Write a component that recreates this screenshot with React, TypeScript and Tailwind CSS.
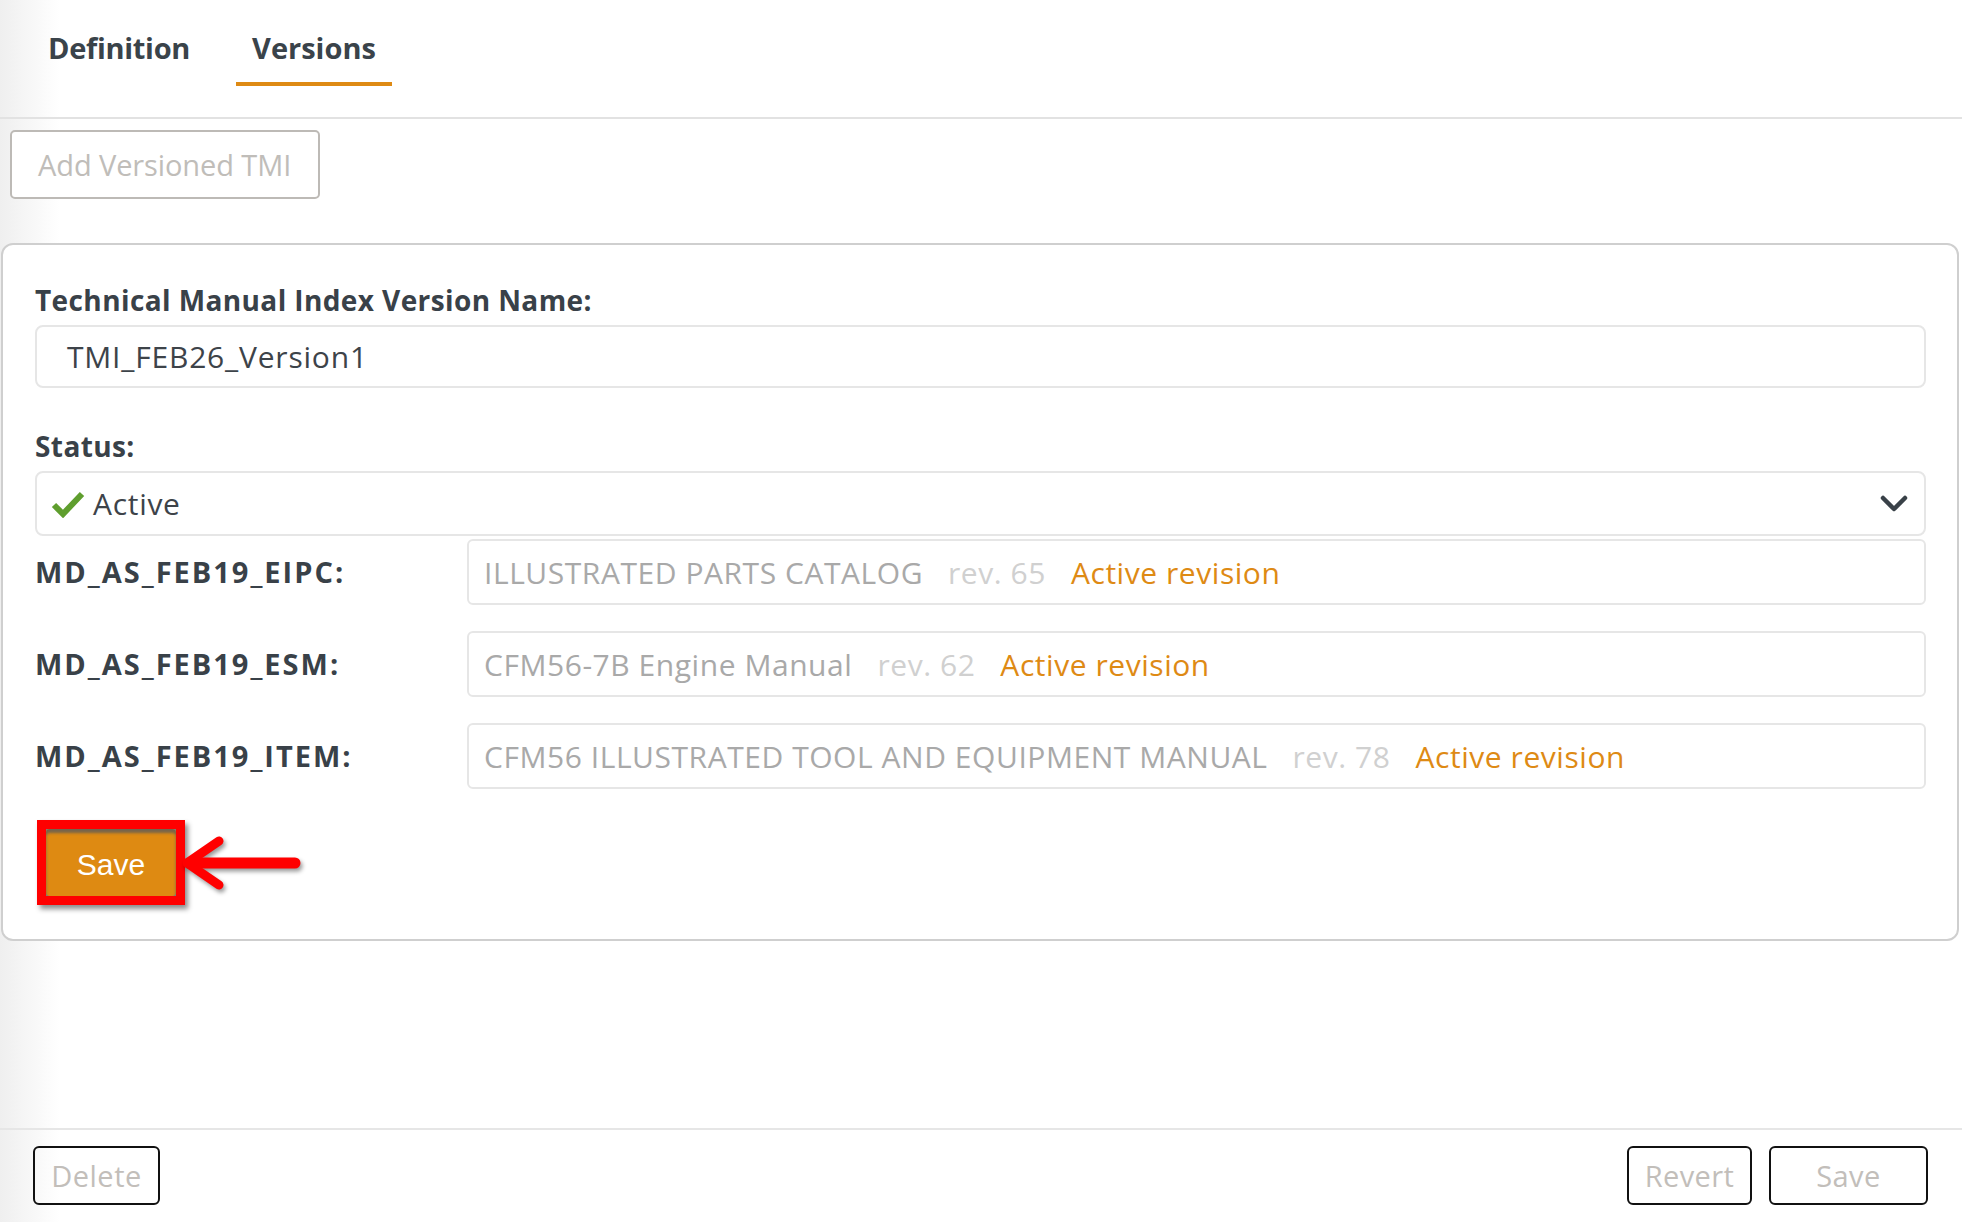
import React from "react";

const font = "font-['Open_Sans',sans-serif]";

function Row({ label, title, rev }: { label: string; title: string; rev: string }) {
  return (
    <div className="flex items-center">
      <div className="w-[432px] shrink-0 text-[29px] font-bold text-[#394148] tracking-[2px]">{label}</div>
      <div className="flex h-[66px] flex-1 items-center rounded-[6px] border-2 border-[#e6e6e6] pl-[15px] text-[30px] tracking-[0.55px]">
        <span className="text-[#a9a9a9]">{title}</span>
        <span className="ml-[25px] text-[#d0d0d0]">{rev}</span>
        <span className="ml-[25px] text-[#de8a14]">Active revision</span>
      </div>
    </div>
  );
}

export default function App() {
  return (
    <div className={`${font} relative flex h-[1222px] w-[1962px] flex-col overflow-hidden bg-[linear-gradient(to_right,#efefef,#ffffff_60px)]`}>
      {/* Tabs */}
      <div className="flex h-[119px] shrink-0 items-start gap-[30px] border-b-2 border-[#e2e2e2] pl-[32px] pt-[26px]">
        <div className="flex h-[60px] items-start px-[16px] text-[29px] font-bold text-[#3a434a] tracking-[-0.3px]">Definition</div>
        <div className="flex h-[60px] items-start border-b-4 border-[#de8a14] px-[16px] text-[29px] font-bold text-[#3a434a] tracking-[0px]">Versions</div>
      </div>

      {/* Add button */}
      <div className="ml-[10px] mt-[11px] flex h-[69px] w-[310px] items-center rounded-[5px] border-2 border-[#bdbab6] bg-white pl-[26px] text-[29px] text-[#c0bdb9] tracking-[-0.1px]">
        Add Versioned TMI
      </div>

      {/* Card */}
      <div className="ml-[1px] mt-[44px] flex h-[698px] w-[1958px] flex-col rounded-[12px] border-2 border-[#cfcfcf] bg-white pl-[32px] pr-[31px] pt-[37px]">
        <div className="h-[36px] text-[28px] font-bold leading-[36px] text-[#394148] tracking-[0.4px]">Technical Manual Index Version Name:</div>
        <div className="mt-[7px] flex h-[63px] items-center rounded-[8px] border-2 border-[#e6e6e6] pl-[30px] text-[30px] text-[#3d4349] tracking-[0.8px]">
          TMI_FEB26_Version1
        </div>
        <div className="mt-[40px] h-[36px] text-[28px] font-bold leading-[36px] text-[#394148] tracking-[0.4px]">Status:</div>
        <div className="mt-[7px] flex h-[65px] items-center rounded-[8px] border-2 border-[#e6e6e6] pl-[14px] pr-[16px] text-[30px] text-[#3d4349] tracking-[0.7px]">
          <svg width="34" height="28" viewBox="0 0 34 28" className="mr-[8px]">
            <path d="M3 15 L12 24 L31 4" fill="none" stroke="#5f9e2e" strokeWidth="6" strokeLinecap="butt" strokeLinejoin="miter" />
          </svg>
          <span>Active</span>
          <svg width="28" height="18" viewBox="0 0 28 18" className="ml-auto">
            <path d="M3 3 L14 14 L25 3" fill="none" stroke="#394148" strokeWidth="4.5" strokeLinecap="round" strokeLinejoin="round" />
          </svg>
        </div>
        <div className="mt-[3px] flex flex-col gap-[26px]">
          <Row label="MD_AS_FEB19_EIPC:" title="ILLUSTRATED PARTS CATALOG" rev="rev. 65" />
          <Row label="MD_AS_FEB19_ESM:" title="CFM56-7B Engine Manual" rev="rev. 62" />
          <Row label="MD_AS_FEB19_ITEM:" title="CFM56 ILLUSTRATED TOOL AND EQUIPMENT MANUAL" rev="rev. 78" />
        </div>

        {/* Highlighted save */}
        <div className="mt-[31px] flex items-center">
          <div className="ml-[2px] flex h-[85px] w-[148px] items-center justify-center border-[9px] border-[#ff0000] bg-[#7a7a7a] shadow-[3px_4px_5px_rgba(0,0,0,0.45)]">
            <div className="flex h-full w-full items-center justify-center rounded-[4px] bg-[#de8a12] pt-[4px] font-['Liberation_Sans',sans-serif] text-[30px] text-white shadow-[inset_0_4px_3px_rgba(90,90,90,0.8)]">
              Save
            </div>
          </div>
          <svg width="120" height="56" viewBox="0 0 120 56" className="-ml-[2px] drop-shadow-[2px_3px_2px_rgba(0,0,0,0.4)]">
            <path d="M6 28 L112 28" stroke="#ff0000" strokeWidth="11" strokeLinecap="round" />
            <path d="M36 6 L4 28 L36 50" fill="none" stroke="#ff0000" strokeWidth="9" strokeLinecap="round" strokeLinejoin="round" />
          </svg>
        </div>
      </div>

      {/* Footer */}
      <div className="mt-auto flex h-[94px] shrink-0 items-start border-t-2 border-[#e6e6e6] pl-[33px] pr-[34px] pt-[16px]">
        <div className="flex h-[59px] w-[127px] items-center justify-center rounded-[6px] border-2 border-[#111] text-[29px] text-[#c2beba] tracking-[0.5px]">Delete</div>
        <div className="ml-auto flex h-[59px] w-[125px] items-center justify-center rounded-[6px] border-2 border-[#111] text-[29px] text-[#c2beba] tracking-[0.4px]">Revert</div>
        <div className="ml-[17px] flex h-[59px] w-[159px] items-center justify-center rounded-[6px] border-2 border-[#111] text-[29px] text-[#c2beba] tracking-[0.4px]">Save</div>
      </div>
    </div>
  );
}
